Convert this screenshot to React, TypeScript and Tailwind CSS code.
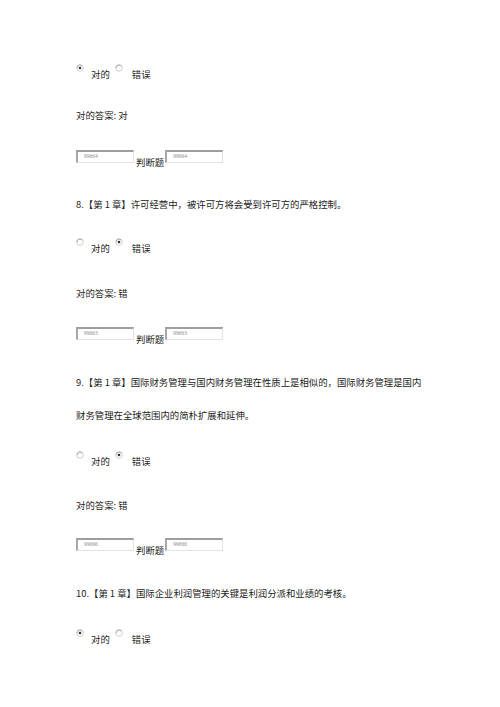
import React from "react";

const font = { fontFamily: '"Noto Sans CJK SC", "Noto Sans", sans-serif' };

function Radio({ checked }: { checked: boolean }) {
  return (
    <svg width="8" height="8" viewBox="0 0 8 8" className="shrink-0 self-start mt-[1px]">
      <circle cx="4" cy="4" r="3.3" fill="#fff" stroke="#c4c4c4" strokeWidth="0.8" />
      <path d="M1.2 4 A2.8 2.8 0 0 1 6.4 2.4" fill="none" stroke="#9a9a9a" strokeWidth="0.8" />
      {checked && <circle cx="4" cy="4" r="1.3" fill="#333" />}
    </svg>
  );
}

function RadioRow({ right, mt }: { right: boolean; mt: string }) {
  return (
    <div className={`flex h-[20px] items-center text-[9.4px] text-[#222] ${mt}`}>
      <Radio checked={!right} />
      <span className="ml-[7px] leading-[12px] mt-[2px]">对的</span>
      <span className="ml-[5px] flex self-start"><Radio checked={right} /></span>
      <span className="ml-[9px] leading-[12px] mt-[2px]">错误</span>
    </div>
  );
}

function Box({ value }: { value: string }) {
  return (
    <div className="mt-[4px] h-[13px] w-[58px] border-t-[2px] border-l-[2px] border-r border-b border-t-[#9d9d9d] border-l-[#a8a8a8] border-r-[#e2e2e2] border-b-[#e2e2e2] bg-white pl-[6px] pt-[1px] text-[5.5px] leading-[7px] text-[#8a8a8a]" style={{ fontFamily: '"Liberation Serif", serif' }}>
      {value}
    </div>
  );
}

function InputRow({ value, mt }: { value: string; mt: string }) {
  return (
    <div className={`flex h-[20px] items-start text-[9.4px] text-[#222] ${mt}`}>
      <Box value={value} />
      <span className="mt-[10px] ml-[2px] mr-[1px] leading-[12px]">判断题</span>
      <Box value={value} />
    </div>
  );
}

function Line({ children, mt }: { children: React.ReactNode; mt: string }) {
  return (
    <div className={`flex h-[20px] items-center text-[9.4px] leading-[12px] text-[#222] whitespace-nowrap ${mt}`}>
      {children}
    </div>
  );
}

export default function App() {
  return (
    <div className="min-h-[707px] w-[500px] bg-white pl-[76px] pt-[63px]" style={font}>
      <RadioRow right={false} mt="mt-0" />
      <Line mt="mt-[22px]">对的答案: 对</Line>
      <InputRow value="99664" mt="mt-[21px]" />

      <Line mt="mt-[28px]">8.【第 1 章】许可经营中，被许可方将会受到许可方的严格控制。</Line>
      <RadioRow right={true} mt="mt-[23px]" />
      <Line mt="mt-[26px]">对的答案: 错</Line>
      <InputRow value="99663" mt="mt-[20px]" />

      <Line mt="mt-[29px]">9.【第 1 章】国际财务管理与国内财务管理在性质上是相似的，国际财务管理是国内</Line>
      <Line mt="mt-[13px]">财务管理在全球范围内的简朴扩展和延伸。</Line>
      <RadioRow right={true} mt="mt-[25px]" />
      <Line mt="mt-[25px]">对的答案: 错</Line>
      <InputRow value="99666" mt="mt-[19px]" />

      <Line mt="mt-[29px]">10.【第 1 章】国际企业利润管理的关键是利润分派和业绩的考核。</Line>
      <RadioRow right={false} mt="mt-[25px]" />
    </div>
  );
}
